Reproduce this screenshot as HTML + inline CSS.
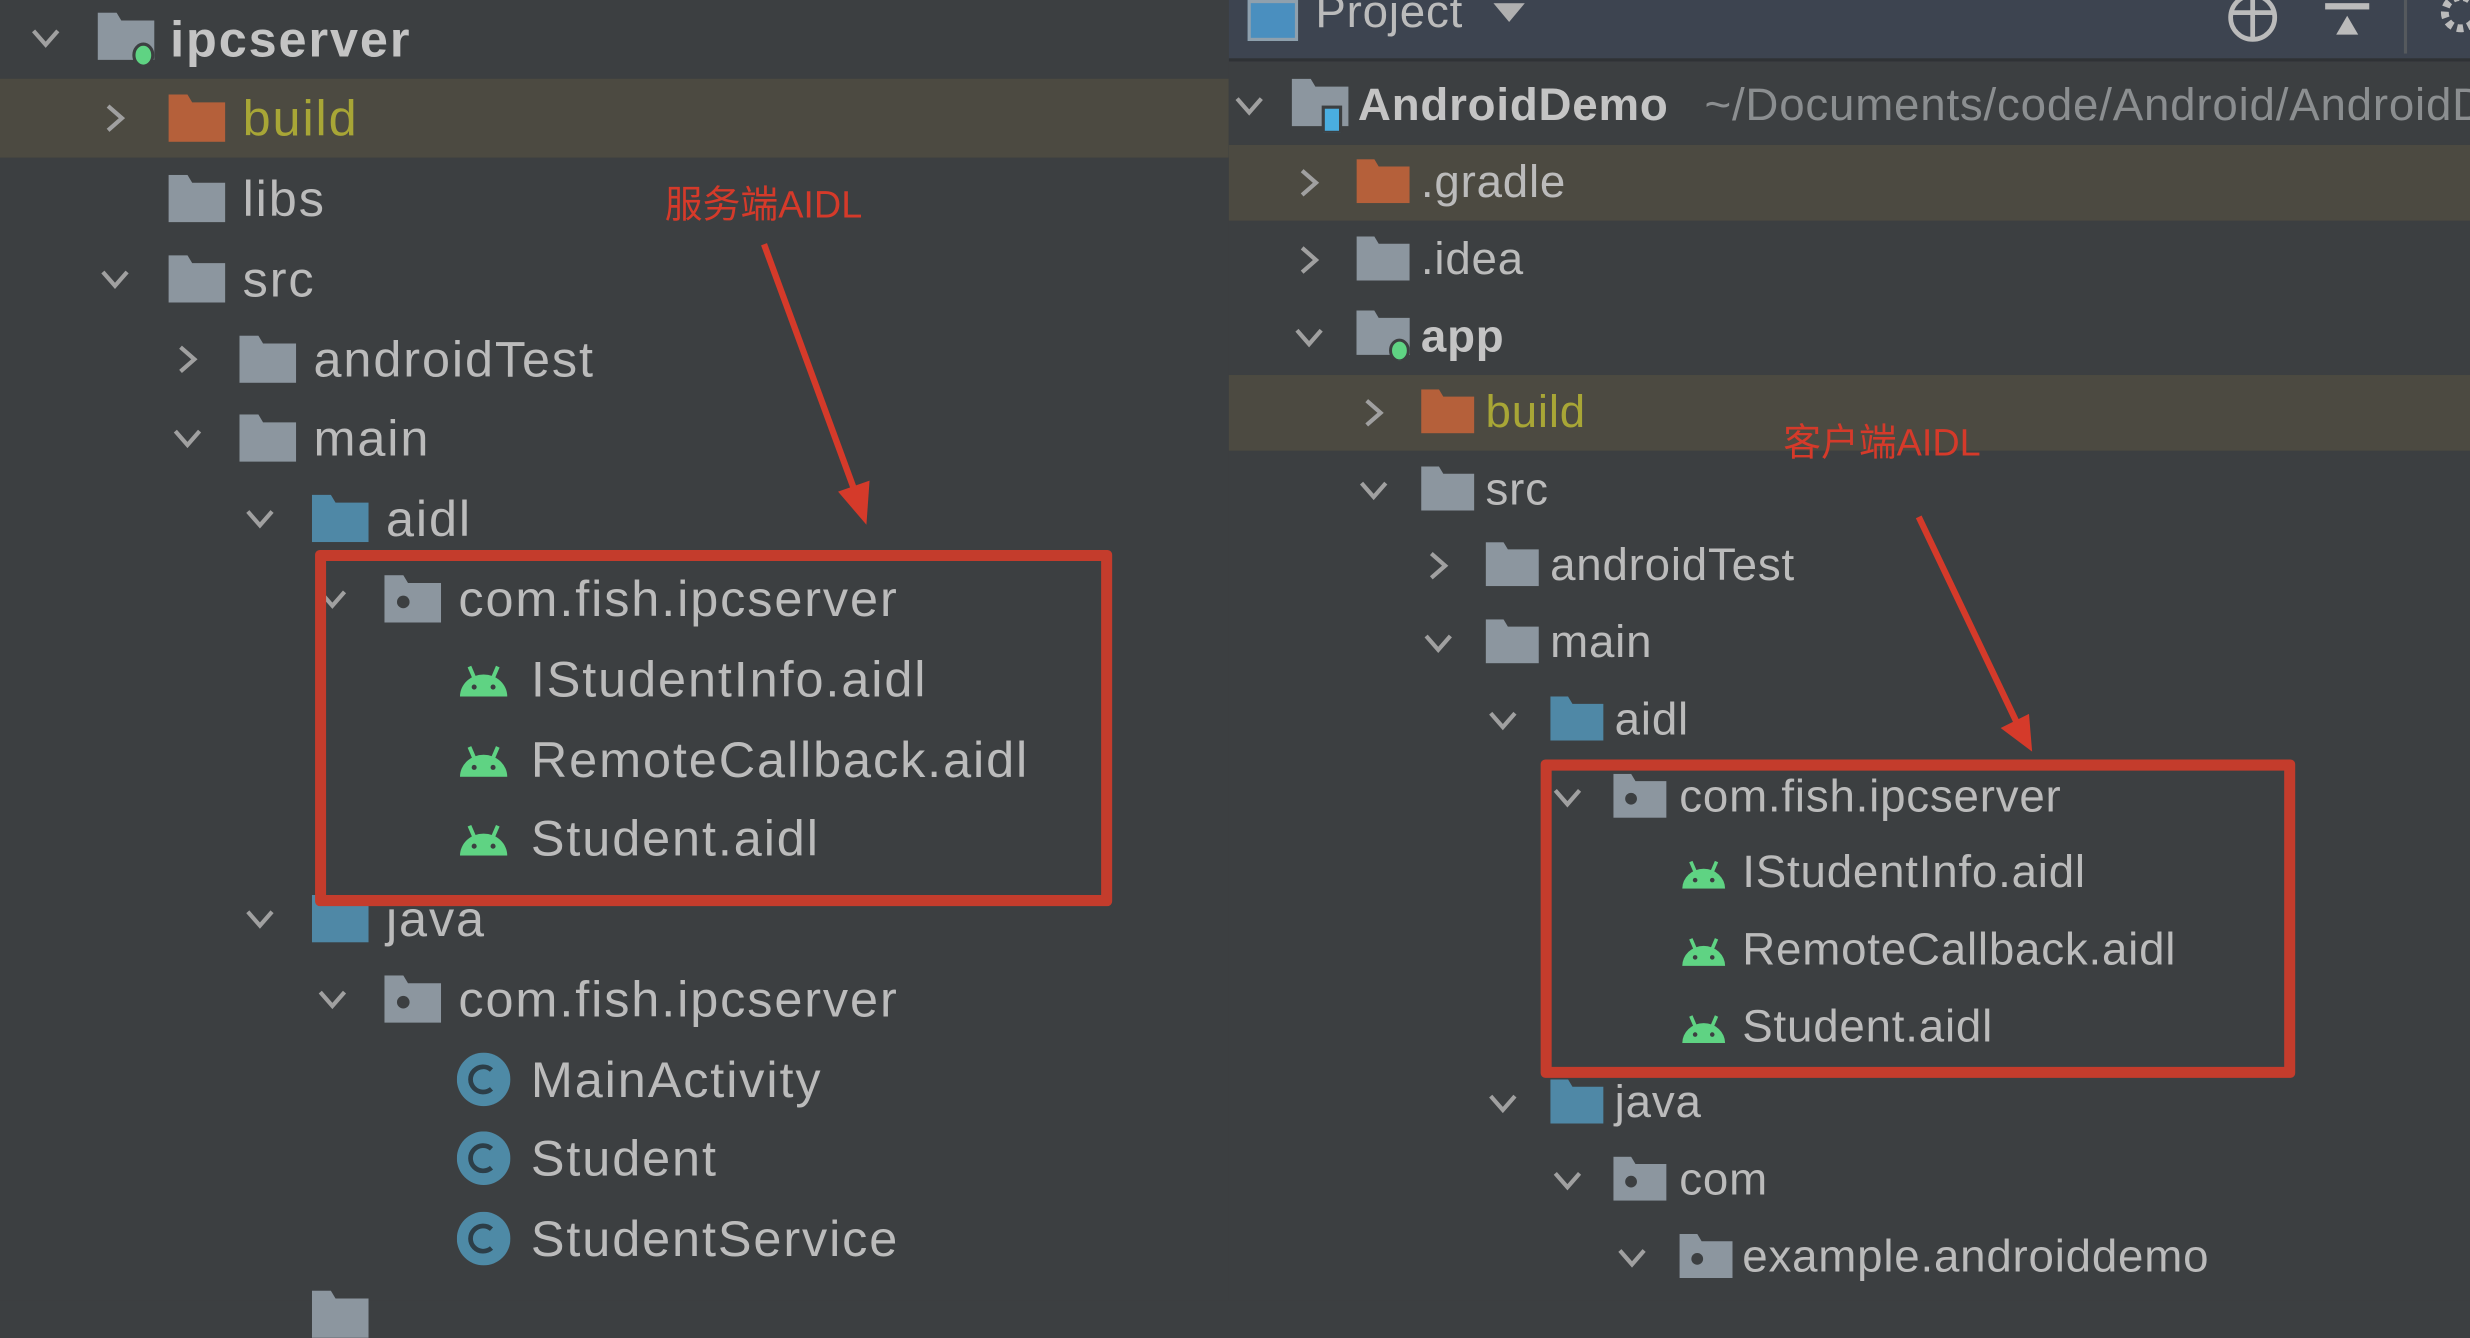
<!DOCTYPE html>
<html><head><meta charset="utf-8">
<style>
html,body{margin:0;padding:0;width:2470px;height:1300px;overflow:hidden;background:#3c3f41}
#s{position:absolute;left:0;top:0;width:1568px;height:825px;transform:scale(1.5753,1.5758);transform-origin:0 0;background:#3c3f41;font-family:"Liberation Sans",sans-serif;color:#bbbbbb}
.r{position:absolute;height:50px;line-height:50px;white-space:nowrap}
.r svg{position:absolute;top:50%}
.L{font-size:32px;letter-spacing:1.2px}
.R{font-size:29px;letter-spacing:0.5px}
.t{position:absolute;top:0}
.hl{position:absolute;background:#4c4a41}
.box{position:absolute;border:7px solid #c43c2c;box-sizing:border-box;border-radius:3px}
.lab{position:absolute;color:#d53a2a;font-family:"Liberation Sans","Noto Sans CJK SC",sans-serif;font-size:24px}
</style></head><body><div id="s">
<svg width="0" height="0" style="position:absolute">
<defs>
<symbol id="cd" viewBox="0 0 20 20"><polyline points="3,6 10,14 17,6" fill="none" stroke="#a0a0a0" stroke-width="2.4"/></symbol>
<symbol id="cr" viewBox="0 0 20 20"><polyline points="6,3 14,10 6,17" fill="none" stroke="#a0a0a0" stroke-width="2.4"/></symbol>
<symbol id="fg" viewBox="0 0 36 30"><path d="M0 0h12l3 5h21v25H0z" fill="#8c969f"/></symbol>
<symbol id="fo" viewBox="0 0 36 30"><path d="M0 0h12l3 5h21v25H0z" fill="#b5603a"/></symbol>
<symbol id="fb" viewBox="0 0 36 30"><path d="M0 0h12l3 5h21v25H0z" fill="#4f88a6"/></symbol>
<symbol id="fp" viewBox="0 0 36 30"><path d="M0 0h12l3 5h21v25H0z" fill="#8c969f"/><circle cx="12" cy="17" r="4" fill="#3c3f41"/></symbol>
<symbol id="fm" viewBox="0 0 36 34"><path d="M0 0h12l3 5h21v25H0z" fill="#8c969f"/><ellipse cx="29" cy="27" rx="6" ry="7" fill="#5fd383" stroke="#3c3f41" stroke-width="2"/></symbol>
<symbol id="fd" viewBox="0 0 36 34"><path d="M0 0h12l3 5h21v25H0z" fill="#8c969f"/><rect x="20" y="18" width="11" height="16" fill="#4aaee0" stroke="#3c3f41" stroke-width="2"/></symbol>
<symbol id="an" viewBox="0 0 32 22"><path d="M1 22a15 14 0 0 1 30 0z" fill="#5fd383"/><line x1="7" y1="3" x2="10" y2="10" stroke="#5fd383" stroke-width="2.5"/><line x1="25" y1="3" x2="22" y2="10" stroke="#5fd383" stroke-width="2.5"/><circle cx="10" cy="16" r="1.6" fill="#3c3f41"/><circle cx="22" cy="16" r="1.6" fill="#3c3f41"/></symbol>
<symbol id="cc" viewBox="0 0 34 34"><circle cx="17" cy="17" r="17" fill="#4e8aa6"/><path d="M22 11a8 8 0 1 0 0 12" fill="none" stroke="#2c3e48" stroke-width="3"/></symbol>
</defs></svg>

<div class="hl" style="left:0;top:50px;width:780px;height:50px"></div>

<div class="r L" style="top:0;left:0;width:780px"><svg style="left:18px;margin-top:-12px" width="22" height="22"><use href="#cd"/></svg><svg style="left:62px;margin-top:-17px" width="36" height="34"><use href="#fm"/></svg><span class="t" style="left:108px;font-weight:bold;color:#c4c4c4">ipcserver</span></div>
<div class="r L" style="top:50px;left:0"><svg style="left:62px;margin-top:-11px" width="22" height="22"><use href="#cr"/></svg><svg style="left:107px;margin-top:-15px" width="36" height="30"><use href="#fo"/></svg><span class="t" style="left:154px;color:#a8a636">build</span></div>
<div class="r L" style="top:101px;left:0"><svg style="left:107px;margin-top:-15px" width="36" height="30"><use href="#fg"/></svg><span class="t" style="left:154px">libs</span></div>
<div class="r L" style="top:152px;left:0"><svg style="left:62px;margin-top:-11px" width="22" height="22"><use href="#cd"/></svg><svg style="left:107px;margin-top:-15px" width="36" height="30"><use href="#fg"/></svg><span class="t" style="left:154px">src</span></div>
<div class="r L" style="top:203px;left:0"><svg style="left:108px;margin-top:-11px" width="22" height="22"><use href="#cr"/></svg><svg style="left:152px;margin-top:-15px" width="36" height="30"><use href="#fg"/></svg><span class="t" style="left:199px">androidTest</span></div>
<div class="r L" style="top:253px;left:0"><svg style="left:108px;margin-top:-11px" width="22" height="22"><use href="#cd"/></svg><svg style="left:152px;margin-top:-15px" width="36" height="30"><use href="#fg"/></svg><span class="t" style="left:199px">main</span></div>
<div class="r L" style="top:304px;left:0"><svg style="left:154px;margin-top:-11px" width="22" height="22"><use href="#cd"/></svg><svg style="left:198px;margin-top:-15px" width="36" height="30"><use href="#fb"/></svg><span class="t" style="left:245px">aidl</span></div>
<div class="r L" style="top:355px;left:0"><svg style="left:200px;margin-top:-11px" width="22" height="22"><use href="#cd"/></svg><svg style="left:244px;margin-top:-15px" width="36" height="30"><use href="#fp"/></svg><span class="t" style="left:291px">com.fish.ipcserver</span></div>
<div class="r L" style="top:406px;left:0"><svg style="left:291px;margin-top:-11px" width="32" height="22"><use href="#an"/></svg><span class="t" style="left:337px">IStudentInfo.aidl</span></div>
<div class="r L" style="top:457px;left:0"><svg style="left:291px;margin-top:-11px" width="32" height="22"><use href="#an"/></svg><span class="t" style="left:337px">RemoteCallback.aidl</span></div>
<div class="r L" style="top:507px;left:0"><svg style="left:291px;margin-top:-11px" width="32" height="22"><use href="#an"/></svg><span class="t" style="left:337px">Student.aidl</span></div>
<div class="r L" style="top:558px;left:0"><svg style="left:154px;margin-top:-11px" width="22" height="22"><use href="#cd"/></svg><svg style="left:198px;margin-top:-15px" width="36" height="30"><use href="#fb"/></svg><span class="t" style="left:245px">java</span></div>
<div class="r L" style="top:609px;left:0"><svg style="left:200px;margin-top:-11px" width="22" height="22"><use href="#cd"/></svg><svg style="left:244px;margin-top:-15px" width="36" height="30"><use href="#fp"/></svg><span class="t" style="left:291px">com.fish.ipcserver</span></div>
<div class="r L" style="top:660px;left:0"><svg style="left:290px;margin-top:-17px" width="34" height="34"><use href="#cc"/></svg><span class="t" style="left:337px">MainActivity</span></div>
<div class="r L" style="top:710px;left:0"><svg style="left:290px;margin-top:-17px" width="34" height="34"><use href="#cc"/></svg><span class="t" style="left:337px">Student</span></div>
<div class="r L" style="top:761px;left:0"><svg style="left:290px;margin-top:-17px" width="34" height="34"><use href="#cc"/></svg><span class="t" style="left:337px">StudentService</span></div>
<svg style="position:absolute;left:198px;top:819px" width="36" height="30"><use href="#fg"/></svg>

<div class="box" style="left:200px;top:349px;width:506px;height:226px"></div>
<div class="lab" style="left:422px;top:110px">服务端AIDL</div>
<svg style="position:absolute;left:0;top:0" width="780" height="825"><line x1="485" y1="155" x2="542" y2="310" stroke="#d53a2a" stroke-width="4"/><polygon points="532,312 552,305 550,333" fill="#d53a2a"/></svg>

<div style="position:absolute;left:780px;top:0;width:788px;height:825px;background:#3c3f41;overflow:hidden">
 <div style="position:absolute;left:0;top:0;width:788px;height:37px;background:#3d4450;border-bottom:2px solid #2f3235"></div>
 <div style="position:absolute;left:12px;top:0;width:28px;height:22px;background:#4a8fbf;border:2px solid #8fa0ad"></div>
 <div class="R" style="position:absolute;left:55px;top:-10px;line-height:36px">Project</div>
 <svg style="position:absolute;left:168px;top:2px" width="20" height="14"><polygon points="0,0 20,0 10,12" fill="#b0b0b0"/></svg>
 <svg style="position:absolute;left:633px;top:-6px" width="34" height="34"><circle cx="17" cy="17" r="14" fill="none" stroke="#bbb" stroke-width="3"/><line x1="17" y1="3" x2="17" y2="31" stroke="#bbb" stroke-width="3"/><line x1="3" y1="14" x2="31" y2="14" stroke="#bbb" stroke-width="3"/></svg>
 <svg style="position:absolute;left:695px;top:0" width="30" height="26"><rect x="1" y="2" width="28" height="4" fill="#bbb"/><polygon points="15,10 22,22 8,22" fill="#bbb"/></svg>
 <div style="position:absolute;left:746px;top:0;width:2px;height:34px;background:#55595d"></div>
 <svg style="position:absolute;left:768px;top:-6px" width="24" height="34"><circle cx="14" cy="14" r="10" fill="none" stroke="#bbb" stroke-width="5" stroke-dasharray="4 3"/></svg>

 <div class="hl" style="left:0;top:92px;width:788px;height:48px"></div>
 <div class="hl" style="left:0;top:238px;width:788px;height:48px"></div>

 <div class="r R" style="top:42px;left:0"><svg style="left:2px;margin-top:-11px" width="22" height="22"><use href="#cd"/></svg><svg style="left:40px;margin-top:-17px" width="36" height="34"><use href="#fd"/></svg><span class="t" style="left:82px;font-weight:bold;color:#c4c4c4">AndroidDemo</span><span class="t" style="left:302px;color:#8b8e90">~/Documents/code/Android/AndroidDemo</span></div>
 <div class="r R" style="top:91px;left:0"><svg style="left:40px;margin-top:-11px" width="22" height="22"><use href="#cr"/></svg><svg style="left:81px;margin-top:-15px" width="34" height="28"><use href="#fo"/></svg><span class="t" style="left:122px">.gradle</span></div>
 <div class="r R" style="top:140px;left:0"><svg style="left:40px;margin-top:-11px" width="22" height="22"><use href="#cr"/></svg><svg style="left:81px;margin-top:-15px" width="34" height="28"><use href="#fg"/></svg><span class="t" style="left:122px">.idea</span></div>
 <div class="r R" style="top:189px;left:0"><svg style="left:40px;margin-top:-11px" width="22" height="22"><use href="#cd"/></svg><svg style="left:81px;margin-top:-17px" width="34" height="32"><use href="#fm"/></svg><span class="t" style="left:122px;font-weight:bold;color:#c4c4c4">app</span></div>
 <div class="r R" style="top:237px;left:0"><svg style="left:81px;margin-top:-11px" width="22" height="22"><use href="#cr"/></svg><svg style="left:122px;margin-top:-15px" width="34" height="28"><use href="#fo"/></svg><span class="t" style="left:163px;color:#a8a636">build</span></div>
 <div class="r R" style="top:286px;left:0"><svg style="left:81px;margin-top:-11px" width="22" height="22"><use href="#cd"/></svg><svg style="left:122px;margin-top:-15px" width="34" height="28"><use href="#fg"/></svg><span class="t" style="left:163px">src</span></div>
 <div class="r R" style="top:334px;left:0"><svg style="left:122px;margin-top:-11px" width="22" height="22"><use href="#cr"/></svg><svg style="left:163px;margin-top:-15px" width="34" height="28"><use href="#fg"/></svg><span class="t" style="left:204px">androidTest</span></div>
 <div class="r R" style="top:383px;left:0"><svg style="left:122px;margin-top:-11px" width="22" height="22"><use href="#cd"/></svg><svg style="left:163px;margin-top:-15px" width="34" height="28"><use href="#fg"/></svg><span class="t" style="left:204px">main</span></div>
 <div class="r R" style="top:432px;left:0"><svg style="left:163px;margin-top:-11px" width="22" height="22"><use href="#cd"/></svg><svg style="left:204px;margin-top:-15px" width="34" height="28"><use href="#fb"/></svg><span class="t" style="left:245px">aidl</span></div>
 <div class="r R" style="top:481px;left:0"><svg style="left:204px;margin-top:-11px" width="22" height="22"><use href="#cd"/></svg><svg style="left:244px;margin-top:-15px" width="34" height="28"><use href="#fp"/></svg><span class="t" style="left:286px">com.fish.ipcserver</span></div>
 <div class="r R" style="top:529px;left:0"><svg style="left:287px;margin-top:-10px" width="29" height="20"><use href="#an"/></svg><span class="t" style="left:326px">IStudentInfo.aidl</span></div>
 <div class="r R" style="top:578px;left:0"><svg style="left:287px;margin-top:-10px" width="29" height="20"><use href="#an"/></svg><span class="t" style="left:326px">RemoteCallback.aidl</span></div>
 <div class="r R" style="top:627px;left:0"><svg style="left:287px;margin-top:-10px" width="29" height="20"><use href="#an"/></svg><span class="t" style="left:326px">Student.aidl</span></div>
 <div class="r R" style="top:675px;left:0"><svg style="left:163px;margin-top:-11px" width="22" height="22"><use href="#cd"/></svg><svg style="left:204px;margin-top:-15px" width="34" height="28"><use href="#fb"/></svg><span class="t" style="left:245px">java</span></div>
 <div class="r R" style="top:724px;left:0"><svg style="left:204px;margin-top:-11px" width="22" height="22"><use href="#cd"/></svg><svg style="left:244px;margin-top:-15px" width="34" height="28"><use href="#fp"/></svg><span class="t" style="left:286px">com</span></div>
 <div class="r R" style="top:773px;left:0"><svg style="left:245px;margin-top:-11px" width="22" height="22"><use href="#cd"/></svg><svg style="left:286px;margin-top:-15px" width="34" height="28"><use href="#fp"/></svg><span class="t" style="left:326px">example.androiddemo</span></div>

 <div class="box" style="left:198px;top:482px;width:479px;height:202px"></div>
 <div class="lab" style="left:352px;top:261px">客户端AIDL</div>
 <svg style="position:absolute;left:0;top:0" width="788" height="825"><line x1="438" y1="328" x2="500" y2="458" stroke="#d53a2a" stroke-width="4"/><polygon points="490,462 508,453 510,477" fill="#d53a2a"/></svg>
</div>
</div></body></html>
